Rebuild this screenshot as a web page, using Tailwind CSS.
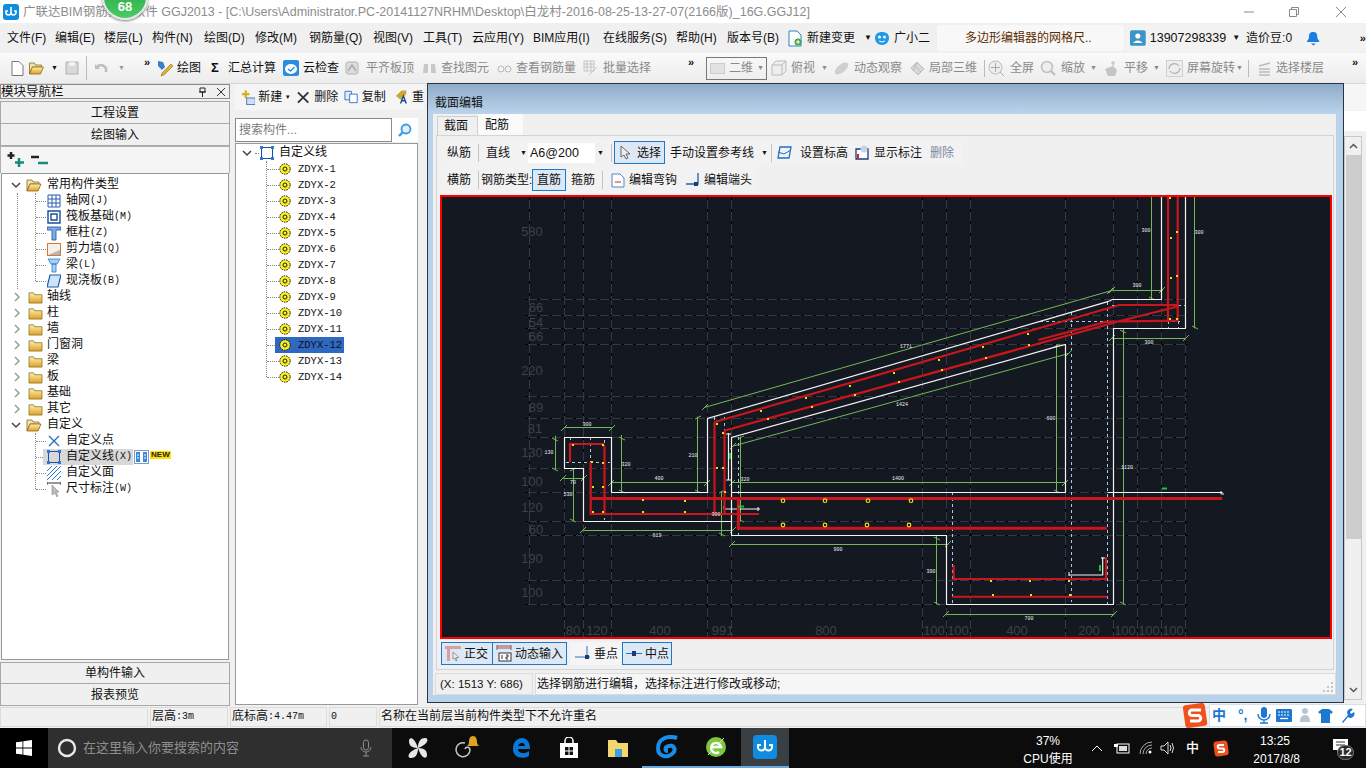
<!DOCTYPE html>
<html lang="zh-CN">
<head>
<meta charset="UTF-8">
<title>广联达BIM钢筋算量软件 GGJ2013</title>
<script src="https://cdn.jsdelivr.net/npm/@tailwindcss/browser@4"></script>
</head>
<body class="bg-white">
<svg class="absolute w-0 h-0">
  <defs>
    <linearGradient id="fold" x1="0" y1="0" x2="0" y2="1"><stop offset="0" stop-color="#fdeeb0"/><stop offset="1" stop-color="#e0a020"/></linearGradient>
    <symbol id="folder" viewBox="0 0 16 14"><path d="M1 2h5l1 2h8v9H1z" fill="url(#fold)" stroke="#8a6a20" stroke-width=".8"/></symbol>
    <symbol id="folderopen" viewBox="0 0 16 14"><path d="M1 2h5l1 2h6v2H4l-3 7z" fill="#f4e2a8" stroke="#8a6a20" stroke-width=".8"/><path d="M1 13l3-7h11l-3 7z" fill="url(#fold)" stroke="#8a6a20" stroke-width=".8"/></symbol>
    <symbol id="gear" viewBox="0 0 12 12"><circle cx="6" cy="6" r="5.2" fill="#f6f020" stroke="#111" stroke-width="1" stroke-dasharray="1.5 1"/><circle cx="6" cy="6" r="2" fill="#f6f020" stroke="#222" stroke-width="1"/></symbol>
    <symbol id="line" viewBox="0 0 14 14"><rect x="1.5" y="1.5" width="11" height="11" fill="none" stroke="#1c4fa8" stroke-width="1"/><path d="M0 0h3v3H0zM11 0h3v3h-3zM0 11h3v3H0zM11 11h3v3h-3z" fill="#2a78d8"/></symbol>
    <symbol id="gicon" viewBox="0 0 16 16"><rect x="2" y="2" width="12" height="12" rx="2" fill="#dcdcdc" stroke="#b4b4b4"/><path d="M4 11l4-6 4 6" fill="none" stroke="#a8a8a8" stroke-width="1.4"/></symbol>
    <symbol id="closed" viewBox="0 0 45 16"><path d="M13 2l4 6-4 6" transform="translate(0 0)" fill="none" stroke="#a4a4a4" stroke-width="1.500"/><path d="M23 8h4" stroke="#888" stroke-dasharray="1 1"/></symbol>
  </defs>
</svg>
<div class="relative flex flex-col w-[1366px] h-[768px] overflow-hidden bg-[#f0f0f0] text-[12px] leading-4 text-[#111] font-['Liberation_Sans','Noto_Sans_CJK_SC',sans-serif]">

  <!-- title bar -->
  <div class="flex items-center h-[23px] bg-white shrink-0 text-[12.5px] text-[#8c8c8c] whitespace-nowrap">
    <svg class="ml-[3px] mr-[4px]" width="16" height="16" viewBox="0 0 16 16"><rect width="16" height="16" rx="3" fill="#0f8be0"/><path d="M8 3v7M5 7H3v1.5a2.5 2.5 0 0 0 5 0 2.5 2.5 0 0 0 5 0V7h-2" fill="none" stroke="#fff" stroke-width="1.6"/></svg>
    <span>广联达BIM钢筋算量软件 GGJ2013 - [C:\Users\Administrator.PC-20141127NRHM\Desktop\白龙村-2016-08-25-13-27-07(2166版)_16G.GGJ12]</span>
    <div class="ml-auto flex items-center">
      <svg width="12" height="12" viewBox="0 0 12 12" class="mr-[33px]"><path d="M1 6h10" stroke="#8a8a8a"/></svg>
      <svg width="12" height="12" viewBox="0 0 12 12" class="mr-[35px]"><path d="M1.5 3.5h7v7h-7zM3.5 3.5v-2h7v7h-2" fill="none" stroke="#8a8a8a"/></svg>
      <svg width="12" height="12" viewBox="0 0 12 12" class="mr-[19px]"><path d="M1 1l10 10M11 1L1 11" stroke="#8a8a8a"/></svg>
    </div>
  </div>
  <div class="absolute left-[102px] top-[-26px] w-[46px] h-[46px] rounded-full bg-[linear-gradient(#1e9c3c,#49cc62)] border-2 border-[#e6e6e6] shadow-[0_1px_3px_#777] flex items-end justify-center pb-[4px] text-white font-bold text-[13px] leading-[14px]">68</div>

  <!-- menu bar -->
  <div class="flex items-center h-[30px] shrink-0 pl-[7px] bg-[#f0f0f0] whitespace-nowrap">
    <span class="w-[48px]">文件(F)</span><span class="w-[49px]">编辑(E)</span><span class="w-[48px]">楼层(L)</span><span class="w-[52px]">构件(N)</span><span class="w-[51px]">绘图(D)</span><span class="w-[54px]">修改(M)</span><span class="w-[64px]">钢筋量(Q)</span><span class="w-[50px]">视图(V)</span><span class="w-[49px]">工具(T)</span><span class="w-[61px]">云应用(Y)</span><span class="w-[70px]">BIM应用(I)</span><span class="w-[73px]">在线服务(S)</span><span class="w-[51px]">帮助(H)</span><span class="w-[61px]">版本号(B)</span>
    <span class="w-[19px]"><svg width="15" height="17" viewBox="0 0 15 17"><path d="M1 1h8l4 4v11H1z" fill="#fff" stroke="#2a80d0"/><circle cx="10" cy="12" r="3.5" fill="#4aa83a"/><path d="M8 12h4M10 10v4" stroke="#fff"/></svg></span>
    <span class="w-[57px]">新建变更</span><span class="w-[10px] text-[8px]">▼</span>
    <span class="w-[20px]"><svg width="16" height="15" viewBox="0 0 16 15"><path d="M8 1c4 0 7 2 7 6s-3 7-7 7-7-3-7-7 3-6 7-6z" fill="#1c9ae8"/><circle cx="5.5" cy="6" r="1.5" fill="#fff"/><circle cx="10.5" cy="6" r="1.5" fill="#fff"/><path d="M5 10q3 2 6 0" stroke="#fff" fill="none"/></svg></span>
    <span class="w-[43px]">广小二</span>
    <span class="flex items-center w-[187px] h-[26px] pl-[28px] bg-[#f8f8f8] rounded-sm text-[#5c2c00]">多边形编辑器的网格尺..</span>
    <span class="w-[2px]"></span>
    <span class="flex items-center w-[240px] h-[26px] bg-[#f2f2f2]">
      <svg class="ml-[4px] mr-[4px]" width="16" height="16" viewBox="0 0 16 16"><rect width="16" height="16" rx="2" fill="#3c94c8"/><circle cx="8" cy="6" r="2.6" fill="#fff"/><path d="M3 13q5-5 10 0z" fill="#fff"/></svg>
      <span class="w-[84px] text-[12.5px]">13907298339</span><span class="w-[14px] text-[8px]">▼</span><span class="w-[62px]">造价豆:0</span>
      <svg width="13" height="15" viewBox="0 0 13 15"><path d="M6.500 1c3 0 4 2 4 5 0 2 1 3 2 4v1H0v-1c1-1 2-2 2-4 0-3 1-5 4.500-5z" fill="#1c7ce0"/><path d="M4 12.500h5l-2.500 2z" fill="#1c7ce0"/></svg>
      <span class="ml-[40px] text-[11px] leading-3 font-bold">»</span>
    </span>
  </div>

  <!-- main toolbar -->
  <div class="flex items-center h-[30px] shrink-0 whitespace-nowrap bg-[linear-gradient(#fafafa,#ececec)] text-[#8a8a8a]">
    <span class="flex items-center w-[153px] text-[#111] pl-[7px]">
      <svg class="w-[21px]" height="15" viewBox="0 0 12 15"><path d="M.5.500h7l4 4v10H.5z" fill="#fff" stroke="#777"/></svg>
      <svg class="w-[17px]" height="14" viewBox="0 0 16 14"><use href="#folderopen"/></svg>
      <span class="w-[20px] pl-[6px] text-[7px]">▼</span>
      <svg width="14" height="14" viewBox="0 0 14 14"><path d="M1 1h12v12H1z" fill="#d8d8d8" stroke="#b0b0b0"/><path d="M4 1h6v4H4z" fill="#f0f0f0"/></svg>
      <span class="ml-[7px] w-[1px] h-[24px] bg-[#bbb]"></span>
      <svg class="ml-[7px]" width="14" height="13" viewBox="0 0 14 13"><path d="M2 6q5-6 10 0v4" fill="none" stroke="#bdbdbd" stroke-width="2.500"/><path d="M1 2v5h5z" fill="#bdbdbd"/></svg>
      <span class="ml-[10px] w-[26px] text-[7px] text-[#999]">▼</span>
      <span class="text-[11px] leading-3 font-bold text-[#111] -mt-3">»</span>
    </span>
    <span class="flex items-center w-[24px] justify-center"><svg width="18" height="18" viewBox="0 0 18 18"><path d="M2 2l5 1 2 5-3 3-4-4z" fill="#3c7cc8"/><path d="M6 14L15 5l2 2-9 9-3 1z" fill="#e0b030" stroke="#8a7030" stroke-width=".6"/></svg></span>
    <span class="w-[34px] text-[#111]">绘图</span>
    <span class="w-[17px] font-bold text-[#111] text-[13px]">Σ</span>
    <span class="w-[55px] text-[#111]">汇总计算</span>
    <span class="w-[20px]"><svg width="16" height="16" viewBox="0 0 16 16"><rect width="16" height="16" rx="2" fill="#2a8ee0"/><ellipse cx="8" cy="9" rx="6" ry="5" fill="#fff"/><path d="M5 9l2.500 2 4-4" fill="none" stroke="#2a8ee0" stroke-width="1.400"/></svg></span>
    <span class="w-[41px] text-[#111]">云检查</span>
    <span class="w-[22px]"><svg width="16" height="16"><use href="#gicon"/></svg></span><span class="w-[56px]">平齐板顶</span>
    <span class="w-[19px]"><svg width="15" height="14" viewBox="0 0 15 14"><path d="M2 3h4v9H1zM9 3h4l1 9H9z" fill="#c8c8c8"/></svg></span><span class="w-[56px]">查找图元</span>
    <span class="w-[19px]"><svg width="15" height="10" viewBox="0 0 15 10"><circle cx="4" cy="6" r="3" fill="none" stroke="#b8b8b8"/><circle cx="11" cy="6" r="3" fill="none" stroke="#b8b8b8"/></svg></span><span class="w-[67px]">查看钢筋量</span>
    <span class="w-[20px]"><svg width="16" height="16" viewBox="0 0 16 16"><path d="M1 1h10v10H1zM1 4h10M1 7h10M4 1v10M8 1v10M6 15l8-8" fill="none" stroke="#c4c4c4"/></svg></span><span class="w-[85px]">批量选择</span>
    <span class="w-[14px] text-[11px] leading-3 font-bold text-[#111] -mt-3">»</span><span class="w-[4px]"></span>
    <span class="flex items-center w-[61px] h-[23px] border border-[#777] pl-[3px]">
      <span class="w-[15px] h-[11px] mr-[4px] bg-[#e2e2e2] border border-[#ccc]"></span><span class="w-[28px]">二维</span><span class="text-[7px]">▼</span>
    </span>
    <span class="w-[24px] pl-[4px]"><svg width="16" height="16" viewBox="0 0 16 16"><path d="M1 5l4-4h10v10l-4 4H1zM1 5h10v10M11 5l4-4" fill="#eee" stroke="#bbb"/></svg></span><span class="w-[30px]">俯视</span><span class="w-[12px] text-[7px]">▼</span>
    <span class="w-[21px]"><svg width="17" height="17" viewBox="0 0 17 17"><ellipse cx="8.500" cy="8.500" rx="8" ry="4" transform="rotate(-40 8.500 8.500)" fill="#cfcfcf"/></svg></span><span class="w-[56px]">动态观察</span>
    <span class="w-[19px]"><svg width="15" height="15" viewBox="0 0 15 15"><path d="M1 7l6-6 7 7-6 6z" fill="#d8d8d8" stroke="#bbb"/><path d="M4 4l7 7M7 2l-4 8" stroke="#bbb"/></svg></span><span class="w-[55px]">局部三维</span>
    <span class="w-[1px] h-[17px] bg-[#bbb] mr-[3px]"></span>
    <span class="w-[22px]"><svg width="17" height="17" viewBox="0 0 17 17"><circle cx="7.500" cy="7.500" r="6.500" fill="#eee" stroke="#bbb"/><path d="M7.500 3v9M3 7.500h9M12 12l4 4" stroke="#aaa"/></svg></span><span class="w-[30px]">全屏</span>
    <span class="w-[21px]"><svg width="16" height="16" viewBox="0 0 16 16"><circle cx="7" cy="7" r="5.500" fill="#eee" stroke="#c0c0c0" stroke-width="1.500"/><path d="M11 11l4 4" stroke="#bbb" stroke-width="2"/></svg></span><span class="w-[29px]">缩放</span><span class="w-[13px] text-[7px]">▼</span>
    <span class="w-[21px]"><svg width="15" height="17" viewBox="0 0 15 17"><path d="M2 9l8-3 4 4-2 6H5z" fill="#c4c4c4"/><path d="M10 1v5M8 3h4" stroke="#bbb"/></svg></span><span class="w-[29px]">平移</span><span class="w-[13px] text-[7px]">▼</span>
    <span class="w-[21px]"><svg width="17" height="17" viewBox="0 0 17 17"><rect x=".5" y=".5" width="16" height="16" fill="#eee" stroke="#d0d0d0"/><path d="M3 9a5.500 5.500 0 0 1 10-3M14 8a5.500 5.500 0 0 1-10 3" fill="none" stroke="#b4b4b4" stroke-width="1.300"/></svg></span><span class="w-[49px]">屏幕旋转</span><span class="w-[12px] text-[7px]">▼</span>
    <span class="w-[1px] h-[17px] bg-[#bbb] mr-[3px]"></span>
    <span class="w-[24px] pl-[5px]"><svg width="15" height="15" viewBox="0 0 15 15"><path d="M2 5l11-3M2 8h11M2 11h11M2 14h11" stroke="#bbb" stroke-width="1.300"/></svg></span><span class="w-[76px]">选择楼层</span>
    <span class="w-[14px] text-[11px] leading-3 font-bold text-[#111] -mt-3">»</span>
  </div>

  <!-- main area -->
  <div class="flex h-[624px] shrink-0 border-t border-[#d8d8d8]">
    <!-- module navigation -->
    <div class="flex flex-col w-[230px] shrink-0 pb-[1px]">
      <div class="flex items-center h-[15px] border border-[#8c8c8c] text-[12.5px] bg-[#f0f0f0]">
        <span class="flex-1">模块导航栏</span>
        <svg class="mr-[10px]" width="9" height="10" viewBox="0 0 9 10"><path d="M2 1h5v4H2zM1 5h7M4.500 5v5" fill="none" stroke="#222"/></svg>
        <svg class="mr-[4px]" width="8" height="8" viewBox="0 0 8 8"><path d="M0 0l8 8M8 0L0 8" stroke="#333"/></svg>
      </div>
      <div class="flex items-center justify-center h-[23px] mt-[2px] border border-[#a8a8a8]">工程设置</div>
      <div class="flex items-center justify-center h-[22px] border border-t-0 border-[#a8a8a8]">绘图输入</div>
      <div class="flex items-center h-[27px] border-x border-t border-[#b0b0b0] pl-[6px] gap-[6px] bg-[#f5f5f5]">
        <svg width="18" height="16" viewBox="0 0 18 16"><path d="M4 0v7M.5 3.500h7" stroke="#222" stroke-width="2.500"/><path d="M12 6v9M8 10.500h9" stroke="#178a7a" stroke-width="2.500"/></svg>
        <svg width="18" height="10" viewBox="0 0 18 10"><path d="M0 2h8" stroke="#222" stroke-width="2.500"/><path d="M7 8h10" stroke="#178a7a" stroke-width="2.500"/></svg>
      </div>
      <div class="flex-1 mx-[1px] border border-[#999] bg-white pt-[3px] font-['Liberation_Mono','Noto_Sans_CJK_SC',monospace] whitespace-nowrap">
        <div class="flex items-center h-4"><svg class="ml-[9px] mr-[5px]" width="10" height="7" viewBox="0 0 10 7"><path d="M1 1l4 4 4-4" fill="none" stroke="#444" stroke-width="1.500"/></svg><svg class="mr-[5px]" width="16" height="14"><use href="#folderopen"/></svg>常用构件类型</div>
        <div class="relative">
          <span class="absolute left-[15px] top-0 bottom-[0px] border-l border-dotted border-[#888]"></span>
          <span class="absolute left-[33px] top-0 bottom-2 border-l border-dotted border-[#888]"></span>
          <div class="flex items-center h-4 pl-[34px]"><span class="w-[10px] mr-[1px] border-t border-dotted border-[#888]"></span><svg class="mr-[5px]" width="14" height="14" viewBox="0 0 14 14"><path d="M1 1h12v12H1zM1 5h12M1 9h12M5 1v12M9 1v12" fill="none" stroke="#2a5cb0"/></svg>轴网<span class="text-[10px]">(J)</span></div>
          <div class="flex items-center h-4 pl-[34px]"><span class="w-[10px] mr-[1px] border-t border-dotted border-[#888]"></span><svg class="mr-[5px]" width="14" height="14" viewBox="0 0 14 14"><path d="M1 1h12v12H1zM4 4h6v6H4z" fill="none" stroke="#1c4c98" stroke-width="1.400"/></svg>筏板基础<span class="text-[10px]">(M)</span></div>
          <div class="flex items-center h-4 pl-[34px]"><span class="w-[10px] mr-[1px] border-t border-dotted border-[#888]"></span><svg class="mr-[5px]" width="14" height="15" viewBox="0 0 14 15"><path d="M0 1h14v3H9v10H5V4H0z" fill="#7ab0e8" stroke="#1c4c98" stroke-width=".8"/></svg>框柱<span class="text-[10px]">(Z)</span></div>
          <div class="flex items-center h-4 pl-[34px]"><span class="w-[10px] mr-[1px] border-t border-dotted border-[#888]"></span><svg class="mr-[5px]" width="14" height="13" viewBox="0 0 14 13"><rect x=".5" y=".5" width="13" height="12" fill="#f4f0ec" stroke="#d87830"/><path d="M1 12l12-5v5z" fill="#b4b4b4"/></svg>剪力墙<span class="text-[10px]">(Q)</span></div>
          <div class="flex items-center h-4 pl-[34px]"><span class="w-[10px] mr-[1px] border-t border-dotted border-[#888]"></span><svg class="mr-[5px]" width="14" height="15" viewBox="0 0 14 15"><path d="M1 1h12l-3 5H4zM5 6h4v8H5z" fill="#a8d0f4" stroke="#2a78d0" stroke-width=".8"/></svg>梁<span class="text-[10px]">(L)</span></div>
          <div class="flex items-center h-4 pl-[34px]"><span class="w-[10px] mr-[1px] border-t border-dotted border-[#888]"></span><svg class="mr-[5px]" width="14" height="14" viewBox="0 0 14 14"><path d="M3 1h11l-3 12H0z" fill="#cfe4f8" stroke="#1c5cb0" stroke-width="1.200"/></svg>现浇板<span class="text-[10px]">(B)</span></div>
        </div>
        <div class="flex items-center h-4"><svg class="ml-[12px] mr-[8px]" width="6" height="10" viewBox="0 0 6 10"><path d="M1 1l4 4-4 4" fill="none" stroke="#999" stroke-width="1.500"/></svg><svg class="mr-[4px]" width="15" height="13"><use href="#folder"/></svg>轴线</div>
        <div class="flex items-center h-4"><svg class="ml-[12px] mr-[8px]" width="6" height="10" viewBox="0 0 6 10"><path d="M1 1l4 4-4 4" fill="none" stroke="#999" stroke-width="1.500"/></svg><svg class="mr-[4px]" width="15" height="13"><use href="#folder"/></svg>柱</div>
        <div class="flex items-center h-4"><svg class="ml-[12px] mr-[8px]" width="6" height="10" viewBox="0 0 6 10"><path d="M1 1l4 4-4 4" fill="none" stroke="#999" stroke-width="1.500"/></svg><svg class="mr-[4px]" width="15" height="13"><use href="#folder"/></svg>墙</div>
        <div class="flex items-center h-4"><svg class="ml-[12px] mr-[8px]" width="6" height="10" viewBox="0 0 6 10"><path d="M1 1l4 4-4 4" fill="none" stroke="#999" stroke-width="1.500"/></svg><svg class="mr-[4px]" width="15" height="13"><use href="#folder"/></svg>门窗洞</div>
        <div class="flex items-center h-4"><svg class="ml-[12px] mr-[8px]" width="6" height="10" viewBox="0 0 6 10"><path d="M1 1l4 4-4 4" fill="none" stroke="#999" stroke-width="1.500"/></svg><svg class="mr-[4px]" width="15" height="13"><use href="#folder"/></svg>梁</div>
        <div class="flex items-center h-4"><svg class="ml-[12px] mr-[8px]" width="6" height="10" viewBox="0 0 6 10"><path d="M1 1l4 4-4 4" fill="none" stroke="#999" stroke-width="1.500"/></svg><svg class="mr-[4px]" width="15" height="13"><use href="#folder"/></svg>板</div>
        <div class="flex items-center h-4"><svg class="ml-[12px] mr-[8px]" width="6" height="10" viewBox="0 0 6 10"><path d="M1 1l4 4-4 4" fill="none" stroke="#999" stroke-width="1.500"/></svg><svg class="mr-[4px]" width="15" height="13"><use href="#folder"/></svg>基础</div>
        <div class="flex items-center h-4"><svg class="ml-[12px] mr-[8px]" width="6" height="10" viewBox="0 0 6 10"><path d="M1 1l4 4-4 4" fill="none" stroke="#999" stroke-width="1.500"/></svg><svg class="mr-[4px]" width="15" height="13"><use href="#folder"/></svg>其它</div>
        <div class="flex items-center h-4"><svg class="ml-[9px] mr-[5px]" width="10" height="7" viewBox="0 0 10 7"><path d="M1 1l4 4 4-4" fill="none" stroke="#444" stroke-width="1.500"/></svg><svg class="mr-[5px]" width="16" height="14"><use href="#folderopen"/></svg>自定义</div>
        <div class="relative">
          <span class="absolute left-[33px] top-0 bottom-2 border-l border-dotted border-[#888]"></span>
          <div class="flex items-center h-4 pl-[34px]"><span class="w-[10px] mr-[1px] border-t border-dotted border-[#888]"></span><svg class="mr-[5px]" width="14" height="12" viewBox="0 0 14 12"><path d="M2 1l10 10M12 1L2 11" stroke="#2a70c8" stroke-width="1.400"/></svg>自定义点</div>
          <div class="flex items-center h-4 pl-[34px]"><span class="w-[7px] border-t border-dotted border-[#888]"></span><span class="flex items-center h-4 pl-[3px] pr-[1px] bg-[#d8d8d8]"><span class="w-[1px]"></span><svg class="mr-[5px]" width="14" height="14"><use href="#line"/></svg>自定义线<span class="text-[10px]">(X)</span></span><svg class="ml-[1px]" width="15" height="14" viewBox="0 0 15 14"><rect x=".5" y=".5" width="14" height="13" fill="#fff" stroke="#7a9cc8"/><path d="M2 2h4v10H2zM9 2h4v10H9z" fill="#3a8ad8"/><path d="M3 5h2M3 8h2M10 5h2M10 8h2" stroke="#fff"/></svg><span class="ml-[1px] -mt-[4px] px-[1px] text-[8px] leading-[8px] font-bold bg-[#ffe000] text-[#222] font-['Liberation_Sans',sans-serif]">NEW</span></div>
          <div class="flex items-center h-4 pl-[34px]"><span class="w-[10px] mr-[1px] border-t border-dotted border-[#888]"></span><svg class="mr-[5px]" width="14" height="14" viewBox="0 0 14 14"><path d="M0 5l5-5M0 10L10 0M0 14L14 0M5 14l9-9M10 14l4-4" stroke="#2a78d8"/></svg>自定义面</div>
          <div class="flex items-center h-4 pl-[34px]"><span class="w-[10px] mr-[1px] border-t border-dotted border-[#888]"></span><svg class="mr-[5px]" width="14" height="15" viewBox="0 0 14 15"><path d="M0 1h14M0 0v3M14 0v3" stroke="#333"/><path d="M5 3v10l3-2 2 4 1-1-2-4h3z" fill="#bbb" stroke="#888" stroke-width=".6"/></svg>尺寸标注<span class="text-[10px]">(W)</span></div>
        </div>
      </div>
      <div class="flex items-center justify-center h-[22px] mt-[2px] border border-[#a8a8a8]">单构件输入</div>
      <div class="flex items-center justify-center h-[22px] border border-t-0 border-[#a8a8a8]">报表预览</div>
    </div>

    <!-- component list -->
    <div class="flex flex-col w-[189px] ml-[5px] shrink-0">
      <div class="flex items-center h-[26px] whitespace-nowrap bg-[#f5f5f5] pl-[6px]">
        <svg class="mr-[3px]" width="15" height="15" viewBox="0 0 15 15"><path d="M5 0v8M1 4h8" stroke="#d8b020" stroke-width="2.500"/><rect x="6" y="8" width="9" height="7" fill="#cfe0f4" stroke="#4a78b0"/></svg><span class="w-[29px]">新建</span><span class="w-[12px] text-[7px]">▾</span>
        <svg class="mr-[5px]" width="13" height="13" viewBox="0 0 13 13"><path d="M1 1l11 11M12 1L1 12" stroke="#333" stroke-width="2"/></svg><span class="w-[31px]">删除</span>
        <svg class="mr-[4px]" width="15" height="14" viewBox="0 0 15 14"><path d="M1 1h7v9H1z" fill="#dfeafa" stroke="#3a78c0"/><path d="M6 4h8v9H6z" fill="#fff" stroke="#3a78c0"/></svg><span class="w-[33px]">复制</span>
        <svg class="mr-[4px]" width="16" height="16" viewBox="0 0 16 16"><path d="M3 7l6-6h5v4l-6 6z" fill="#d0a830"/><path d="M8 15l3-8 3 8M9 12h4" fill="none" stroke="#1c4c98" stroke-width="1.500"/></svg><span>重</span>
      </div>
      <div class="flex items-center h-[25px] mt-[7px]">
        <div class="flex items-center w-[157px] h-[24px] border border-[#8a8a8a] bg-white pl-[3px] text-[#7c7c7c]">搜索构件...</div>
        <div class="flex items-center justify-center w-[26px] h-[24px] bg-white"><svg width="14" height="14" viewBox="0 0 14 14"><circle cx="8" cy="6" r="4.500" fill="#dff0fb" stroke="#3a9ae0" stroke-width="1.800"/><path d="M4.500 9.500L1 13" stroke="#3a9ae0" stroke-width="2.400"/></svg></div>
      </div>
      <div class="h-[562px] w-[183px] mt-[1px] border border-[#999] bg-white pt-[1px] font-['Liberation_Mono','Noto_Sans_CJK_SC',monospace] whitespace-nowrap">
        <div class="flex items-center h-4 pl-[6px]"><svg class="mr-[3px]" width="10" height="7" viewBox="0 0 10 7"><path d="M1 1l4 4 4-4" fill="none" stroke="#444" stroke-width="1.500"/></svg><span class="w-[4px] mr-[1px] border-t border-dotted border-[#888]"></span><svg class="mr-[5px]" width="14" height="14"><use href="#line"/></svg>自定义线</div>
        <div class="relative text-[10.500px]">
          <span class="absolute left-[30px] top-0 bottom-2 border-l border-dotted border-[#888]"></span>
          <div class="flex items-center h-4 pl-[31px]"><span class="w-[12px] border-t border-dotted border-[#888]"></span><svg class="mr-[7px]" width="12" height="12"><use href="#gear"/></svg>ZDYX-1</div>
          <div class="flex items-center h-4 pl-[31px]"><span class="w-[12px] border-t border-dotted border-[#888]"></span><svg class="mr-[7px]" width="12" height="12"><use href="#gear"/></svg>ZDYX-2</div>
          <div class="flex items-center h-4 pl-[31px]"><span class="w-[12px] border-t border-dotted border-[#888]"></span><svg class="mr-[7px]" width="12" height="12"><use href="#gear"/></svg>ZDYX-3</div>
          <div class="flex items-center h-4 pl-[31px]"><span class="w-[12px] border-t border-dotted border-[#888]"></span><svg class="mr-[7px]" width="12" height="12"><use href="#gear"/></svg>ZDYX-4</div>
          <div class="flex items-center h-4 pl-[31px]"><span class="w-[12px] border-t border-dotted border-[#888]"></span><svg class="mr-[7px]" width="12" height="12"><use href="#gear"/></svg>ZDYX-5</div>
          <div class="flex items-center h-4 pl-[31px]"><span class="w-[12px] border-t border-dotted border-[#888]"></span><svg class="mr-[7px]" width="12" height="12"><use href="#gear"/></svg>ZDYX-6</div>
          <div class="flex items-center h-4 pl-[31px]"><span class="w-[12px] border-t border-dotted border-[#888]"></span><svg class="mr-[7px]" width="12" height="12"><use href="#gear"/></svg>ZDYX-7</div>
          <div class="flex items-center h-4 pl-[31px]"><span class="w-[12px] border-t border-dotted border-[#888]"></span><svg class="mr-[7px]" width="12" height="12"><use href="#gear"/></svg>ZDYX-8</div>
          <div class="flex items-center h-4 pl-[31px]"><span class="w-[12px] border-t border-dotted border-[#888]"></span><svg class="mr-[7px]" width="12" height="12"><use href="#gear"/></svg>ZDYX-9</div>
          <div class="flex items-center h-4 pl-[31px]"><span class="w-[12px] border-t border-dotted border-[#888]"></span><svg class="mr-[7px]" width="12" height="12"><use href="#gear"/></svg>ZDYX-10</div>
          <div class="flex items-center h-4 pl-[31px]"><span class="w-[12px] border-t border-dotted border-[#888]"></span><svg class="mr-[7px]" width="12" height="12"><use href="#gear"/></svg>ZDYX-11</div>
          <div class="flex items-center h-4 pl-[31px]"><span class="w-[8px] border-t border-dotted border-[#888]"></span><span class="flex items-center h-4 w-[69px] pl-[4px] bg-[#2f68c0]"><svg class="mr-[7px]" width="12" height="12"><use href="#gear"/></svg>ZDYX-12</span></div>
          <div class="flex items-center h-4 pl-[31px]"><span class="w-[12px] border-t border-dotted border-[#888]"></span><svg class="mr-[7px]" width="12" height="12"><use href="#gear"/></svg>ZDYX-13</div>
          <div class="flex items-center h-4 pl-[31px]"><span class="w-[12px] border-t border-dotted border-[#888]"></span><svg class="mr-[7px]" width="12" height="12"><use href="#gear"/></svg>ZDYX-14</div>
        </div>
      </div>
    </div>

    <!-- strip and scroll bar behind the dialog -->
    <div class="flex-1 flex flex-col items-end">
      <div class="w-[23px] h-[26px] bg-[#f6f6f6] shrink-0"></div>
      <div class="w-[23px] h-[20px] mt-[1px] bg-white shrink-0"></div>
      <div class="flex flex-col items-center w-[18px] h-[564px] mt-[5px] mr-[4px] border border-[#c8c8c8] bg-[#f0f0f0] shrink-0">
        <span class="flex items-center justify-center h-[18px] shrink-0"><svg width="9" height="6" viewBox="0 0 9 6"><path d="M1 5l3.500-3.500L8 5" fill="none" stroke="#555" stroke-width="1.500"/></svg></span>
        <span class="w-[15px] h-[384px] shrink-0 bg-[#cdcdcd]"></span>
        <span class="mt-auto mb-[5px] flex items-center justify-center h-[8px]"><svg width="9" height="6" viewBox="0 0 9 6"><path d="M1 1l3.500 3.500L8 1" fill="none" stroke="#555" stroke-width="1.500"/></svg></span>
      </div>
    </div>
  </div>

  <!-- status bar -->
  <div class="flex items-center h-[22px] shrink-0 gap-[2px] font-['Liberation_Mono','Noto_Sans_CJK_SC',monospace] text-[12px] mt-[-1px] bg-[#f0f0f0] whitespace-nowrap">
    <span class="flex items-center w-[148px] h-[20px] border border-[#dcdcdc]"></span>
    <span class="flex items-center w-[78px] h-[20px] border border-[#dcdcdc] pl-[1px]">层高<span class="text-[10px]">:3m</span></span>
    <span class="flex items-center w-[97px] h-[20px] border border-[#dcdcdc] pl-[1px]">底标高<span class="text-[10px]">:4.47m</span></span>
    <span class="flex items-center w-[48px] h-[20px] border border-[#dcdcdc] pl-[1px] text-[10px]">0</span>
    <span class="flex items-center flex-1 h-[20px] border border-[#dcdcdc] pl-[1px]">名称在当前层当前构件类型下不允许重名</span>
  </div>

  <!-- taskbar -->
  <div class="flex items-center h-[40px] shrink-0 bg-[#0c0c0c] text-white whitespace-nowrap">
    <span class="flex items-center justify-center w-[48px] h-full bg-black"><svg width="16" height="16" viewBox="0 0 16 16"><path d="M0 2.300l6.500-.9v6.200H0zM7.300 1.300L16 0v7.600H7.300zM0 8.400h6.500v6.200L0 13.700zM7.300 8.400H16V16l-8.700-1.200z" fill="#fff"/></svg></span>
    <span class="flex items-center w-[344px] h-full bg-[#2f2f2f] text-[#8e8e8e] text-[13px]">
      <svg class="ml-[9px] mr-[6px]" width="20" height="20" viewBox="0 0 20 20"><circle cx="10" cy="10" r="8" fill="none" stroke="#e8e8e8" stroke-width="2.400"/></svg>
      <span class="w-[277px]">在这里输入你要搜索的内容</span>
      <svg width="12" height="18" viewBox="0 0 12 18"><rect x="3.500" y="1" width="5" height="10" rx="2.500" fill="none" stroke="#8e8e8e"/><path d="M1 8a5 5 0 0 0 10 0M6 13v4M3 17h6" fill="none" stroke="#8e8e8e"/></svg>
    </span>
    <span class="flex items-center justify-center w-[51px] h-full"><svg width="22" height="24" viewBox="0 0 22 24"><path d="M11 12C4 12 2 9 2 5s5-5 9 7zM11 12c0-7 3-10 7-10s4 6-7 10zM11 12c7 0 9 3 9 7s-5 5-9-7zM11 12c0 7-3 10-7 10s-4-6 7-10z" fill="#e6e6e6"/></svg></span>
    <span class="flex items-center justify-center w-[48px] h-full"><svg width="28" height="26" viewBox="0 0 28 26"><path d="M12 8a7 7 0 1 0 5 7c0-3-4-4-5-1" fill="none" stroke="#c8c8c8" stroke-width="1.500"/><path d="M20 1c3 0 4 3 4 6 0 2 1 3 2 4H14c1-1 2-2 2-4 0-3 1-6 4-6z" fill="#e0a020"/></svg></span>
    <span class="flex items-center justify-center w-[48px] h-full ml-[6px]"><svg width="20" height="22" viewBox="0 0 20 22"><path d="M2 12C2 5 6 1 11 1c5 0 8 4 8 11H7c0 4 6 6 11 2v5c-7 4-16 1-16-7zM7 9h7c0-4-6-4-7 0z" fill="#0a78d8"/></svg></span>
    <span class="flex items-center justify-center w-[48px] h-full"><svg width="20" height="22" viewBox="0 0 20 22"><path d="M1 6h18v15H1z" fill="#fff"/><path d="M6 6V4a4 4 0 0 1 8 0v2" fill="none" stroke="#fff" stroke-width="1.500"/><path d="M6 10h3.500v3.500H6zM10.500 10H14v3.500h-3.500zM6 14.500h3.500V18H6zM10.500 14.500H14V18h-3.500z" fill="#111"/></svg></span>
    <span class="flex items-center justify-center w-[49px] h-full"><svg width="22" height="20" viewBox="0 0 22 20"><path d="M1 2h8l2 3h10v14H1z" fill="#f4d66c"/><path d="M8 11h7v8H8z" fill="#3aa0e0"/></svg></span>
    <span class="flex items-center justify-center w-[49px] h-full border-b-2 border-[#6aa8e0]"><svg width="24" height="24" viewBox="0 0 24 24"><path d="M22 3C12 0 3 4 3 13s9 10 14 6 2-9-3-8-4 5-1 5" fill="none" stroke="#1b8ce8" stroke-width="4"/></svg></span>
    <span class="flex items-center justify-center w-[50px] h-full border-b-2 border-[#6aa8e0]"><svg width="24" height="24" viewBox="0 0 24 24"><circle cx="12" cy="12" r="10" fill="#7cc83c"/><path d="M7 12h10a5 5 0 1 0-2 5" fill="none" stroke="#fff" stroke-width="2.400"/><path d="M4 20L20 3" stroke="#d8f0b8"/></svg></span>
    <span class="flex items-center justify-center w-[48px] h-full bg-[#3a3f44] border-b-2 border-[#6aa8e0]"><svg width="24" height="24" viewBox="0 0 24 24"><rect width="24" height="24" rx="4" fill="#0f8be0"/><path d="M12 5v10M8 10H5v2a3.500 3.500 0 0 0 7 0 3.500 3.500 0 0 0 7 0v-2h-3" fill="none" stroke="#fff" stroke-width="2"/></svg></span>
    <span class="flex flex-col items-center w-[80px] ml-[219px] pt-[3px] text-[12px] leading-[18px]"><span>37%</span><span>CPU使用</span></span>
    <svg class="ml-[3px]" width="12" height="7" viewBox="0 0 12 7"><path d="M1 6l5-5 5 5" fill="none" stroke="#fff"/></svg>
    <svg class="ml-[11px]" width="16" height="12" viewBox="0 0 16 12"><rect x="3" y="2" width="12" height="9" fill="none" stroke="#fff"/><rect x="5" y="4" width="8" height="5" fill="#ddd"/><path d="M0 2h4v3H0z" fill="#fff"/></svg>
    <svg class="ml-[9px]" width="14" height="14" viewBox="0 0 14 14"><path d="M1 13a12 12 0 0 1 12-12M4 13a9 9 0 0 1 9-9M7 13a6 6 0 0 1 6-6" fill="none" stroke="#aaa"/><circle cx="11" cy="11" r="1.500" fill="#fff"/></svg>
    <svg class="ml-[7px]" width="15" height="14" viewBox="0 0 15 14"><path d="M1 5h3l4-4v12L4 9H1z" fill="none" stroke="#ddd"/><path d="M10 4q2 3 0 6M12 2q3 5 0 10" fill="none" stroke="#ddd"/></svg>
    <span class="ml-[11px] text-[13px] font-medium">中</span>
    <svg class="ml-[14px]" width="16" height="17" viewBox="0 0 16 17"><rect x="1" y="1" width="14" height="15" rx="3" fill="#f0501e" transform="rotate(-8 8 8)"/><path d="M11 5H6.500a1.500 1.500 0 0 0 0 3.500h3a1.500 1.500 0 0 1 0 3.500H5" fill="none" stroke="#fff" stroke-width="2"/></svg>
    <span class="flex flex-col items-end w-[70px] ml-[1px] pt-[3px] text-[12px] leading-[18px]"><span class="pr-[10px]">13:25</span><span>2017/8/8</span></span>
    <span class="relative ml-[30px] w-[26px] h-[26px]">
      <svg width="15" height="14" viewBox="0 0 15 14" class="ml-[3px] mt-[4px]"><path d="M0 0h15v11H7l-3 3v-3H0z" fill="#fff"/><path d="M3 3h9M3 6h9" stroke="#333"/></svg>
      <span class="absolute left-[7px] top-[10px] w-[17px] h-[15px] rounded-full bg-[#2a2a2a] border border-[#777] text-[11px] leading-[13px] text-center font-bold">12</span>
    </span>
  </div>

  <!-- Sogou input bar -->
  <div class="absolute left-[1182px] top-[702px] w-[184px] h-[26px] flex items-center">
    <svg width="27" height="27" viewBox="0 0 27 27"><rect x="2" y="2" width="22" height="23" rx="3" fill="#f0501e" transform="rotate(-8 13 13)"/><path d="M19 8h-9a2.500 2.500 0 0 0 0 5.500h6a2.500 2.500 0 0 1 0 5.500H8" fill="none" stroke="#fff" stroke-width="3"/></svg>
    <span class="flex items-center h-[23px] w-[157px] bg-white border border-[#d4e0ec] text-[#1c78d0] font-bold text-[14px] pl-[2px]">
      <span class="w-[22px]">中</span><span class="w-[22px] pl-[4px] leading-3">°,</span>
      <svg class="mr-[5px] ml-[1px]" width="14" height="17" viewBox="0 0 14 17"><rect x="4" y="0" width="6" height="11" rx="3" fill="#1c78d0"/><path d="M1 7a6 6 0 0 0 12 0M7 13v3M3 16h8" fill="none" stroke="#1c78d0" stroke-width="1.400"/></svg>
      <svg class="mr-[7px]" width="16" height="13" viewBox="0 0 16 13"><rect width="16" height="13" rx="1" fill="#1c78d0"/><path d="M2 3h12M2 6h12" stroke="#fff" stroke-dasharray="2 1"/><path d="M4 9.500h8" stroke="#fff" stroke-width="1.300"/></svg>
      <svg class="mr-[5px]" width="14" height="16" viewBox="0 0 14 16"><circle cx="6" cy="4" r="3" fill="#b8c4d0"/><path d="M1 15q0-7 5-7t5 7z" fill="#b8c4d0"/></svg>
      <svg class="mr-[7px]" width="15" height="15" viewBox="0 0 15 15"><path d="M4 1h7l4 3-2 2-1-1v10H3V5L2 6 0 4z" fill="#1c78d0"/></svg>
      <svg width="15" height="15" viewBox="0 0 15 15"><path d="M2 14l6-7a4 4 0 0 1 5-6l-3 3 1 2 3-2a4 4 0 0 1-6 5l-5 6z" fill="#1c78d0"/></svg>
    </span>
  </div>

  <!-- section editor dialog -->
  <div class="absolute left-[427px] top-[83px] w-[917px] h-[620px] flex flex-col border border-[#2b3440] bg-[#b8d2ea]">
    <div class="flex items-end h-[30px] pl-[7px] pb-[3px] shrink-0 bg-[linear-gradient(#8eabc9,#bcd4ec)]">截面编辑</div>
    <div class="flex flex-col mx-[5px] w-[903px] h-[581px] bg-[#f0f0f0]">
      <div class="flex items-end h-[21px] pl-[4px] shrink-0">
        <span class="flex items-center w-[41px] h-[19px] pl-[6px] border border-b-0 border-[#d0d0d0]">截面</span>
        <span class="flex items-center w-[45px] h-[21px] pl-[7px] bg-[#fafafa]">配筋</span>
      </div>
      <div class="flex flex-col ml-[3px] w-[898px] h-[535px] border border-[#d4d4d4] pt-[3px] pl-[3px] shrink-0">
        <div class="flex items-center h-[27px] w-[521px] ml-[1px] bg-[#f2f2f2] whitespace-nowrap shrink-0">
          <span class="w-[37px] pl-[6px]">纵筋</span><span class="w-[1px] h-[18px] bg-[#c4c4c4] mr-[7px]"></span>
          <span class="w-[34px]">直线</span><span class="w-[8px] text-[7px]">▼</span>
          <span class="flex items-center w-[78px] h-[20px] bg-white pl-[2px] text-[12.5px]">A6@200<span class="flex items-center justify-center ml-auto w-[11px] h-[20px] bg-[#f0f0f0] text-[7px]">▼</span></span>
          <span class="w-[1px] h-[18px] bg-[#c4c4c4] ml-[5px] mr-[1px]"></span>
          <span class="flex items-center w-[51px] h-[23px] ml-[1px] border border-[#1c78c8] bg-[#dce8f4] pl-[5px]"><svg class="mr-[6px]" width="11" height="15" viewBox="0 0 11 15"><path d="M1 1v11l3-2 2 4 2-1-2-4h4z" fill="#eee" stroke="#666"/></svg>选择</span>
          <span class="w-[96px] pl-[5px]">手动设置参考线</span><span class="w-[10px] text-[7px]">▼</span>
          <span class="w-[1px] h-[18px] bg-[#c4c4c4] mr-[5px]"></span>
          <svg class="mr-[8px]" width="15" height="13" viewBox="0 0 15 13"><path d="M3 1h11l-2 11H1z" fill="none" stroke="#1c70c8" stroke-width="1.300"/><path d="M1 6l6 2 7-4" stroke="#1c70c8" fill="none"/></svg>
          <span class="w-[55px]">设置标高</span>
          <svg class="mr-[5px]" width="14" height="15" viewBox="0 0 14 15"><path d="M1 4h12v10H1z" fill="#fff" stroke="#1c3c78" stroke-width="1.300"/><circle cx="9" cy="4" r="3.500" fill="#c8d4e4"/><path d="M3 9v5" stroke="#e02020" stroke-width="2"/></svg>
          <span class="w-[56px]">显示标注</span>
          <span class="text-[#7a8aa0]">删除</span>
        </div>
        <div class="flex items-center h-[26px] w-[316px] mt-[1px] ml-[1px] bg-[#f2f2f2] whitespace-nowrap shrink-0">
          <span class="w-[37px] pl-[6px]">横筋</span><span class="w-[1px] h-[18px] bg-[#c4c4c4] mr-[2px]"></span>
          <span class="w-[51px]">钢筋类型:</span>
          <span class="flex items-center justify-center w-[34px] h-[22px] border border-[#1c78c8] bg-[#dce8f4]">直筋</span>
          <span class="w-[36px] pl-[5px]">箍筋</span><span class="w-[1px] h-[18px] bg-[#c4c4c4] mr-[8px]"></span>
          <svg class="mr-[4px]" width="14" height="15" viewBox="0 0 14 15"><path d="M1 1h8l4 4v9H1z" fill="#fff" stroke="#4a88c8"/><path d="M4 9h6" stroke="#e02020"/></svg>
          <span class="w-[57px]">编辑弯钩</span>
          <svg class="mr-[3px]" width="15" height="15" viewBox="0 0 15 15"><path d="M12 0v11H0" fill="none" stroke="#1c60b0" stroke-width="1.300"/><rect x="8" y="9" width="4" height="4" fill="#1c3c78"/></svg>
          <span>编辑端头</span>
        </div>

        <!-- drawing canvas -->
        <div class="w-[892px] h-[444px] mt-[2px] shrink-0 border-2 border-[#ff0000] bg-[#141820] overflow-hidden">
          <svg width="888" height="440" viewBox="442 197 888 440" fill="none">
            <!-- axis grid -->
            <path stroke="#343944" d="M529.500 197V605M564.500 197V637M583.500 197V637M611.500 197V637M707.500 197V637M731.500 197V637M922.500 197V637M946.500 197V637M970.500 197V637M1065.500 197V637M1113.500 197V637M1137.500 197V637M1161.500 197V637M1185.500 197V637M525 299.500H1188M525 315.500H1188M525 328.500H1188M525 344.500H1188M525 396.500H1188M525 418.500H1188M525 437.500H1188M525 468.500H1188M525 492.500H1188M525 521.500H1188M525 535.500H1188M525 580.500H1188M525 604.500H1188"/>
            <path stroke="#000" stroke-dasharray="3 9" d="M529.500 197V605M564.500 197V637M583.500 197V637M611.500 197V637M707.500 197V637M731.500 197V637M922.500 197V637M946.500 197V637M970.500 197V637M1065.500 197V637M1113.500 197V637M1137.500 197V637M1161.500 197V637M1185.500 197V637M525 299.500H1188M525 315.500H1188M525 328.500H1188M525 344.500H1188M525 396.500H1188M525 418.500H1188M525 437.500H1188M525 468.500H1188M525 492.500H1188M525 521.500H1188M525 535.500H1188M525 580.500H1188M525 604.500H1188"/>
            <g fill="#3c414b" font-size="13" font-family="Liberation Sans, sans-serif" text-anchor="middle">
              <text x="532" y="236">580</text><text x="536" y="312">66</text><text x="536" y="327">54</text><text x="536" y="341">66</text><text x="532" y="375">220</text><text x="536" y="412">89</text><text x="535" y="433">81</text><text x="532" y="457">130</text><text x="532" y="486">100</text><text x="532" y="512">120</text><text x="536" y="534">60</text><text x="532" y="563">190</text><text x="532" y="597">100</text>
              <text x="573" y="635">80</text><text x="597" y="635">120</text><text x="660" y="635">400</text><text x="719" y="635">99</text><text x="730" y="635">1</text><text x="826" y="635">800</text><text x="934" y="635">100</text><text x="958" y="635">100</text><text x="1017" y="635">400</text><text x="1089" y="635">200</text><text x="1125" y="635">100</text><text x="1149" y="635">100</text><text x="1173" y="635">100</text>
            </g>
            <!-- blue dashed stirrup guides -->
            <path stroke="#a8c8e8" stroke-dasharray="3 3" d="M952.500 492V604M1071.500 312V602M1107.500 302V604M1040 321.500H1180M1112 305.500H1185M1168.500 321V328M1178.500 321V328M566 462.500H610M590.500 437V463M604.500 440V520M570.500 437V446M714.500 417V437M724.500 417V437M738.500 437V535"/>
            <!-- green dimension lines -->
            <path stroke="#72b85a" d="M705 407.300L1110 291M733.300 446L1069.300 353.300M564.300 427.500H612.700M555.500 435.700V470M621.500 435V492.300M611.700 482.500H707.300M697.500 416.700V492.300M573.500 468.300V521.700M563.300 478.500H583.700M583.300 530.500H732.700M721.500 491V535.700M740.500 436.700V521.700M731.700 482.500H1065M1056.500 344.300V492.300M731.700 544.500H948.300M936.500 535V604.300M946.300 614.500H1114.300M1123.500 328.300V604.300M1112.300 338.500H1186M1194.500 197V328.300M1151.500 197V299M1112.300 290.500H1162.700"/>
            <path stroke="#72b85a" d="M561 431l6-6M609 431l6-6M552 438l6 3M552 468l6 3M619 437l6 3M619 490l6 3M608 486l6-6M704 486l6-6M695 419l6-3M695 490l6 3M570 471l6-3M570 519l6 3M560 481l6-6M581 481l6-6M580 533l6-6M730 533l6-6M719 493l6-3M719 533l6 3M738 439l6-3M738 519l6 3M729 486l6-6M1062 486l6-6M1054 347l6-3M1054 490l6 3M729 547l6-6M945 547l6-6M934 537l6 3M934 602l6 3M943 617l6-6M1111 617l6-6M1120 330l6 3M1120 602l6 3M1109 341l6-6M1183 341l6-6M1192 326l6 3M1149 297l6 3M1109 293l6-6M1159 293l6-6M702 410l6-6M1107 294l6-6M1066 356l6-6M730 449l6-6"/>
            <!-- white outline -->
            <path stroke="#f4f4f4" stroke-width="1.200" d="M583.500 521.500H731.500M583.500 521.500V468.500H564.500V437.500H611.500V492.500H707.500V418.500L1107.700 301.700 1112.500 299.500H1161.500V197M1185.500 197V328.500H1113.500V604.500H946.500V535.500H731.500V437.500L1056.700 346.700 1065.500 344.500V492.500H731.500M1107.500 492.500H1222.500M724 509H760M724 506v3M728.500 433V480M1069 575H1102.700V557.300"/>
            <path stroke="#f4f4f4" d="M726 434h5M726 480h5M758 507v4M1221 491v3h3M1101 558h4M1069 572v4"/>
            <!-- red rebars -->
            <g stroke="#c8161c">
              <path stroke-width="2.200" d="M570 462V444H603L604.500 447V514M590.700 462V498.500M590.700 498.500V514H759M714.500 422.500V514M724.500 431V514M714 422.300L1119.300 305H1176.700M724 430.700L1120 321 1176.700 306.700M1038.300 340L1106.700 321.700 1178.300 320.700M1168 197V320.700M1177.700 197V320.700"/>
              <path stroke-width="3" d="M590.700 498.500H1222M738.300 498.500V528.300H1106.700"/>
              <path stroke-width="2.200" d="M953.700 565V579H1106V557.300"/>
              <path stroke-width="2" d="M952.300 596.700H1107.300"/>
            </g>
            <!-- rebar points -->
            <path stroke="#f5d820" stroke-width="2" d="M716 424h2M722 433h2M760 411h2M767 419h2M805 398h2M811 407h2M849 386h2M854 395h2M893 373h2M898 382h2M938 360h2M941 370h2M982 347h2M985 358h2M1027 334h2M1028 345h2M1169 198h2M1176 232h2M1170 238h2M1176 276h2M1170 278h2M1169 319h2M1176 319h2M572 445h2M602 445h2M591 462h2M602 463h2M592 487h2M602 487h2M592 512h2M602 512h2M642 500h2M684 501h2M642 512h2M684 512h2M716 468h2M722 468h2M724 492h2M990 581h2M1029 581h2M1068 581h2M992 595h2M1030 595h2M1069 595h2"/>
            <g stroke="#f5d820" stroke-width="1.200" fill="#141820">
              <circle cx="783" cy="500.700" r="1.800"/><circle cx="825" cy="500.700" r="1.800"/><circle cx="868" cy="500.700" r="1.800"/><circle cx="911" cy="500.700" r="1.800"/><circle cx="783" cy="525" r="1.800"/><circle cx="825" cy="525" r="1.800"/><circle cx="867" cy="525" r="1.800"/><circle cx="909" cy="525" r="1.800"/>
            </g>
            <path stroke="#20c030" stroke-width="2" d="M730 453v6M738 506.500h6M1100 565v6M1162 488.500h5"/>
            <!-- tiny dimension values -->
            <g fill="#e8eef8" font-size="5" font-family="Liberation Mono, monospace" text-anchor="middle">
              <text x="587" y="426">300</text><text x="549" y="454">130</text><text x="626" y="466">320</text><text x="659" y="480">400</text><text x="693" y="457">210</text><text x="573" y="484">70</text><text x="568" y="496">530</text><text x="657" y="537">619</text><text x="745" y="481">320</text><text x="716" y="516">300</text><text x="838" y="551">900</text><text x="898" y="480">1400</text><text x="931" y="573">390</text><text x="1029" y="620">700</text><text x="1127" y="469">1120</text><text x="906" y="348">1771</text><text x="902" y="406">1424</text><text x="1051" y="420">600</text><text x="1137" y="287">300</text><text x="1149" y="344">300</text><text x="1146" y="232">300</text><text x="1199" y="234">300</text>
            </g>
          </svg>
        </div>

        <!-- snap buttons -->
        <div class="flex items-center h-[23px] mt-[3px] ml-[1px] whitespace-nowrap shrink-0">
          <span class="flex items-center w-[52px] h-[23px] border border-[#1c78c8] bg-[#dce8f4] pl-[3px]"><svg class="mr-[2px]" width="17" height="17" viewBox="0 0 17 17"><path d="M0 1h16v3H5v12H2V4H0z" fill="#d8a0a0"/><path d="M8 7v7l2-1 1 3 1-.5-1-3h3z" fill="#eee" stroke="#777" stroke-width=".7"/></svg>正交</span>
          <span class="flex items-center w-[75px] h-[23px] -ml-[1px] border border-[#1c78c8] bg-[#dce8f4] pl-[3px]"><svg class="mr-[2px]" width="17" height="17" viewBox="0 0 17 17"><path d="M1 1h14M1 0v5M15 0v5M1 3h14" stroke="#a05050" fill="none"/><rect x="3" y="8" width="12" height="8" fill="#fff" stroke="#333"/><path d="M6 10v4M10 10h2v2h-2v2h2" stroke="#333" fill="none"/></svg>动态输入</span>
          <span class="flex items-center w-[52px] h-[23px] ml-[3px] bg-[#f5f5f5] pl-[5px]"><svg class="mr-[3px]" width="16" height="17" viewBox="0 0 16 17"><path d="M12 1v11M0 12h15" stroke="#2a70c8"/><rect x="10" y="10" width="4" height="4" fill="#1c3c78"/></svg>垂点</span>
          <span class="flex items-center w-[50px] h-[23px] border border-[#1c78c8] bg-[#dce8f4] pl-[3px]"><svg class="mr-[3px]" width="16" height="9" viewBox="0 0 16 9"><path d="M0 4.500h16" stroke="#2a70c8"/><rect x="6" y="2" width="4" height="5" fill="#1c3c78"/></svg>中点</span>
        </div>
      </div>
      <!-- dialog status -->
      <div class="flex items-center h-[22px] mt-[3px] ml-[2px] gap-[2px] shrink-0">
        <span class="flex items-center w-[98px] h-[22px] border border-[#dcdcdc] pl-[4px] text-[11.5px]">(X: 1513 Y: 686)</span>
        <span class="flex items-center flex-1 h-[22px] border border-[#dcdcdc] pl-[1px] bg-[#f6f6f6]">选择钢筋进行编辑，选择标注进行修改或移动;<svg class="ml-auto mr-[2px] self-end mb-[2px]" width="10" height="10" viewBox="0 0 10 10"><path d="M8 0h2v2H8zM4 4h2v2H4zM8 4h2v2H8zM0 8h2v2H0zM4 8h2v2H4zM8 8h2v2H8z" fill="#c4c4c4"/></svg></span>
      </div>
    </div>
  </div>
</div>
</body>
</html>
